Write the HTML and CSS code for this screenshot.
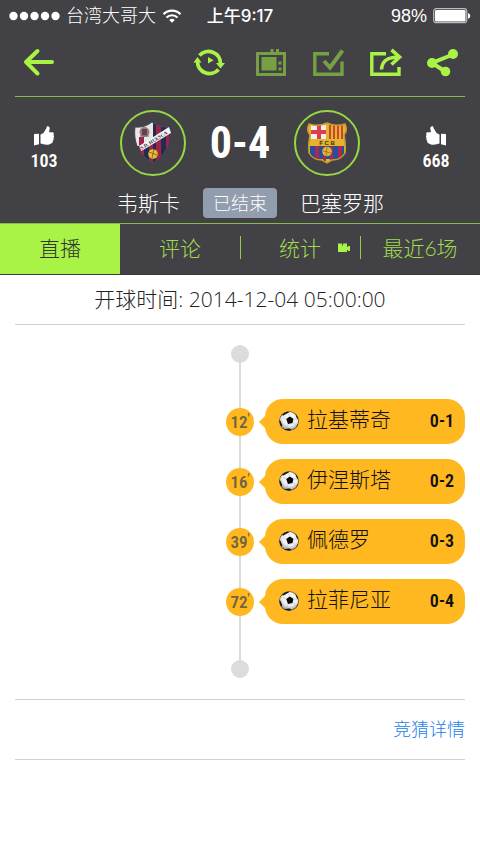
FILE: index.html
```html
<!DOCTYPE html>
<html lang="zh-CN">
<head>
<meta charset="utf-8">
<meta name="viewport" content="width=device-width, initial-scale=1">
<title>韦斯卡 0-4 巴塞罗那</title>
<link rel="stylesheet" href="styles.css">
</head>
<body>
<svg class="defs" aria-hidden="true">
  <defs>
    <radialGradient id="shade" cx="55%" cy="35%" r="70%">
      <stop offset="0" stop-color="#fff"/><stop offset=".6" stop-color="#ebebed"/><stop offset="1" stop-color="#85868c"/>
    </radialGradient>
    <clipPath id="ballclip"><circle cx="10" cy="10" r="9.6"/></clipPath>
    <symbol id="ball" viewBox="0 0 20 20">
      <circle cx="10" cy="10" r="9.8" fill="#3c3320"/>
      <circle cx="10" cy="10" r="9.3" fill="url(#shade)"/>
      <g clip-path="url(#ballclip)">
        <path d="M7.200 8l3.600-2.400 3.600 2.200-.8 4.200-4.600 1z" fill="#090909"/>
        <path d="M3 3.500L8.500 0l2 1-3 1.700-3.500 2zM0 9l1.500 1 1.800 4.200L2 16 0 13zM6 18l4.500-.5 2.500 1.500L11 20H6zM16 2.500l4 4v3l-2-2zM18 14l2-2-1 4-2.500 2z" fill="#151515"/>
        <path d="M10.800 5.600L9.500 2.500M7.200 8L4 6M9.200 13l-1.500 4M13.800 12l3.500 2.500M14.600 7.800L18 8" fill="none" stroke="#b5b5b5" stroke-width=".5"/>
      </g>
    </symbol>
    <symbol id="thumb" viewBox="0 0 20 20">
      <path d="M0 8l5-.3v10.600L0 19.500z"/>
      <path d="M6.500 8.500L9.500 7 12.200 2.500 13 .3c2-.6 3 1 2.600 2.900L15 6.200h3.400c1.600.2 1.900 2 .9 2.900 1 .7.900 2.200 0 2.800.7.800.5 2.200-.5 2.700.5 1-.1 2.200-1.100 2.600l-2 1c-1.600.6-3.500.7-5.200.4l-4-1z"/>
    </symbol>
  </defs>
</svg>

<header class="top">
  <div class="status">
    <div class="carrier">
      <svg class="signal" viewBox="0 0 51 10" aria-hidden="true"><circle cx="4.500" cy="5" r="4.200"/><circle cx="15" cy="5" r="4.200"/><circle cx="25.500" cy="5" r="4.200"/><circle cx="36" cy="5" r="4.200"/><circle cx="46.500" cy="5" r="4.200"/></svg>
      <span>台湾大哥大</span>
      <svg class="wifi" viewBox="0 0 20 14" aria-hidden="true"><path d="M1.500 5.200a12 12 0 0 1 17 0M4.500 8.500a7.800 7.800 0 0 1 11 0" fill="none" stroke="#fff" stroke-width="2.200"/><path d="M7.200 11a4 4 0 0 1 5.600 0L10 13.800z"/></svg>
    </div>
    <time class="clock">上午9:17</time>
    <div class="power">
      <span>98%</span>
      <svg class="battery" viewBox="0 0 38 16" aria-hidden="true"><rect x=".7" y=".7" width="33" height="14" rx="2.500" fill="none" stroke="#bbb" stroke-width="1.200"/><rect x="2" y="2" width="30.500" height="11.500" rx="1.200"/><path d="M35 5c3 .8 3 5 0 5.800z"/></svg>
    </div>
  </div>

  <nav class="toolbar" aria-label="工具">
    <button class="tool back" aria-label="返回"><svg viewBox="0 0 32 28"><path d="M14.500 2L3 13l11.500 11.500M3.500 13H29" fill="none" stroke="#a9f346" stroke-width="4" stroke-linecap="round" stroke-linejoin="round"/></svg></button>
    <button class="tool refresh" aria-label="刷新"><svg viewBox="0 0 32 28"><g fill="none" stroke="#a9f346" stroke-width="3.800"><path d="M5.500 6.500A12 12 0 0 1 26.500 14.500"/><path d="M24.500 20.500A12 12 0 0 1 3.500 12.500"/></g><path d="M22 14h9l-4.500 5.500zM-.5 13.500h8L3.500 8zM14 8l5.500 3.200L14 14.500z" fill="#a9f346"/></svg></button>
    <button class="tool dim" aria-label="电视"><svg viewBox="0 0 32 28"><path d="M14.500 0h3v3h2.500V0h3v3H30v24H0V3h14.500zM3 6v18h24V6z" fill-rule="evenodd"/><path d="M5.500 8h15v13.500h-15zM22.500 12.500h3v3h-3zM22.500 18.500h3v3h-3z"/></svg></button>
    <button class="tool dim" aria-label="预测"><svg viewBox="0 0 32 28"><path d="M16 4.700H1.800v20.600H29V12.500" fill="none" stroke-width="3.400"/><path d="M11 12l6 6.500L29.500 1.500" fill="none" stroke-width="4"/></svg></button>
    <button class="tool" aria-label="转发"><svg viewBox="0 0 32 28"><g fill="none" stroke="#a9f346"><path d="M16 4.700H1.800v20.600H29V18" stroke-width="3.400"/><path d="M11.500 20.500C12 12 17 8 29 8" stroke-width="3.600"/><path d="M21.500.8L29.500 8l-8 7.500" stroke-width="3.600"/></g></svg></button>
    <button class="tool" aria-label="分享"><svg viewBox="0 0 32 28"><path d="M26 5.500L5 14l14 9" fill="none" stroke="#a9f346" stroke-width="4"/><g fill="#a9f346"><circle cx="26" cy="5" r="5"/><circle cx="5" cy="14" r="5"/><circle cx="18.500" cy="22.500" r="4.800"/></g></svg></button>
  </nav>

  <section class="match">
    <div class="board">
      <button class="like"><svg viewBox="0 0 20 20" aria-hidden="true"><use href="#thumb"/></svg><span>103</span></button>
      <div class="teams">
        <div class="crest">
          <svg viewBox="0 0 62 62" role="img" aria-label="韦斯卡">
            <defs><clipPath id="hs"><path d="M13 15Q23 16 30 10Q38 16 48 15C50 33 43 43 31 51C18 44 11 32 13 15z"/></clipPath></defs>
            <g clip-path="url(#hs)">
              <path d="M10 8h42v45H10z" fill="#252b50"/>
              <path d="M12 8h19v26H12z" fill="#e8e6e6"/>
              <path d="M34 8h5v45h-5zM44 8h3v45h-3zM17 25h5v28h-5zM27 30h4v23h-4z" fill="#9d2444"/>
              <circle cx="22.500" cy="20" r="5" fill="#a8776e"/><path d="M20 17h5v6h-5z" fill="#51465e"/><path d="M18 24h9" stroke="#576b76"/>
              <circle cx="31" cy="42" r="4.800" fill="#e3bd3c"/><path d="M27 40l8 3M32 37l-2 9" stroke="#775c22" stroke-width=".8"/>
            </g>
            <path d="M13 15Q23 16 30 10Q38 16 48 15C50 33 43 43 31 51C18 44 11 32 13 15z" fill="none" stroke="#4c4760"/>
            <path d="M17 34l2.500 5L49 21l-2-6z" fill="#f5f5f5"/>
            <text class="crest-name" transform="translate(19.500 38) rotate(-32)">S.D. HUESCA</text>
          </svg>
        </div>
        <strong class="score">0-4</strong>
        <div class="crest">
          <svg viewBox="0 0 62 62" role="img" aria-label="巴塞罗那">
            <defs><clipPath id="fc"><path d="M13 12Q22 15 31 11Q40 15 49 12Q52 18 48 23Q50 33 49 41Q45 48 36 48L31 51 26 48Q17 48 13 41Q12 32 14 23Q10 18 13 12z"/></clipPath></defs>
            <g clip-path="url(#fc)">
              <path d="M10 8h42v44H10z" fill="#e4b32f"/>
              <path d="M15 13h15v14H15z" fill="#f5eee9"/><path d="M21 13h4v14h-4zM15 18h15v4H15z" fill="#d9404b"/>
              <path d="M33 13h2v14h-2zM37 13h2v14h-2zM41 13h2v14h-2zM45 13h2v14h-2z" fill="#cb4634"/>
              <path d="M14 34h34v13H14z" fill="#254f9b"/><path d="M19 34h4v16h-4zM27 34h3v16h-3zM34 34h3v16h-3zM42 34h4v16h-4z" fill="#a82a4d"/>
              <circle cx="31" cy="39.500" r="4.800" fill="#e1b53b"/><path d="M27 39l8 2M31 35l-1 9" stroke="#93702a" stroke-width=".8"/>
            </g>
            <path d="M13 12Q22 15 31 11Q40 15 49 12Q52 18 48 23Q50 33 49 41Q45 48 36 48L31 51 26 48Q17 48 13 41Q12 32 14 23Q10 18 13 12z" fill="none" stroke="#c79a31" stroke-width="1.500"/>
            <text class="crest-fcb" x="31" y="32.500" text-anchor="middle">F C B</text>
          </svg>
        </div>
      </div>
      <button class="like"><svg viewBox="0 0 20 20" aria-hidden="true"><use href="#thumb" transform="matrix(-1 0 0 1 20 0)"/></svg><span>668</span></button>
    </div>
    <div class="names">
      <span class="home">韦斯卡</span>
      <span class="state">已结束</span>
      <span>巴塞罗那</span>
    </div>
  </section>

  <nav class="tabs" aria-label="比赛">
    <a class="tab active" href="#live" aria-current="page">直播</a>
    <a class="tab" href="#comments">评论</a>
    <a class="tab" href="#stats">统计<svg class="camera" viewBox="0 0 12 10" aria-hidden="true"><path d="M0 .5h4v2h1v-2h4V4h1V3h2v5h-2V7H9v2H0z"/></svg></a>
    <a class="tab" href="#recent">最近6场</a>
  </nav>
</header>

<main class="content">
  <p class="kickoff">开球时间: 2014-12-04 05:00:00</p>
  <ol class="timeline">
    <li class="event"><span class="minute">12<sup>'</sup></span><div class="bubble"><svg class="ball" aria-hidden="true"><use href="#ball"/></svg><span class="player">拉基蒂奇</span><b class="result">0-1</b></div></li>
    <li class="event"><span class="minute">16<sup>'</sup></span><div class="bubble"><svg class="ball" aria-hidden="true"><use href="#ball"/></svg><span class="player">伊涅斯塔</span><b class="result">0-2</b></div></li>
    <li class="event"><span class="minute">39<sup>'</sup></span><div class="bubble"><svg class="ball" aria-hidden="true"><use href="#ball"/></svg><span class="player">佩德罗</span><b class="result">0-3</b></div></li>
    <li class="event"><span class="minute">72<sup>'</sup></span><div class="bubble"><svg class="ball" aria-hidden="true"><use href="#ball"/></svg><span class="player">拉菲尼亚</span><b class="result">0-4</b></div></li>
  </ol>
  <div class="more"><a href="#quiz">竞猜详情</a></div>
</main>
</body>
</html>
```
FILE: styles.css
```css
* { box-sizing: border-box; }
body {
  margin: 0;
  background: #fff;
  color: #333;
  font-family: Lato, "Noto Sans CJK SC", sans-serif;
  font-size: 21px;
  font-weight: 300;
}
button { border: 0; padding: 0; background: none; color: inherit; cursor: pointer; }
a { text-decoration: none; }
svg { display: block; }
.defs { position: absolute; width: 0; height: 0; }

.top { background: #424145; color: #fff; }

.status {
  display: grid;
  grid-template-columns: 1fr auto 1fr;
  align-items: center;
  height: 32px;
  padding: 0 9px;
  font-family: "Liberation Sans", "Noto Sans CJK SC", sans-serif;
  font-size: 18px;
  line-height: 32px;
}
.status svg { fill: #fff; }
.carrier, .power { display: flex; align-items: center; gap: 6px; }
.power { justify-content: flex-end; }
.signal { width: 51px; height: 10px; }
.wifi { width: 20px; height: 14px; }
.battery { width: 38px; height: 16px; }
.clock { font-family: Inter, "Noto Sans CJK SC", sans-serif; font-size: 17px; font-weight: 500; }

.toolbar {
  display: flex;
  align-items: center;
  gap: 25px;
  height: 65px;
  margin: 0 15px;
  padding: 0 6px 2px 8px;
  border-bottom: 1px solid #87b94b;
}
.tool svg { width: 32px; height: 28px; overflow: visible; }
.back { margin-right: auto; }
.refresh { margin-right: 5px; }
.dim { fill: #779f44; stroke: #779f44; }
.dim path:not([fill="none"]) { stroke: none; }

.board {
  display: flex;
  align-items: center;
  justify-content: space-between;
  padding: 13px 15px 12px;
}
.like {
  display: flex;
  flex-direction: column;
  align-items: center;
  width: 58px;
  padding-top: 16px;
  font: 600 18px/30px "Roboto Condensed", "Liberation Sans Narrow", sans-serif;
}
.like svg { width: 20px; height: 20px; fill: #fff; }
.teams { display: flex; align-items: center; justify-content: space-between; width: 240px; }
.crest { width: 66px; height: 66px; border: 2px solid #96d842; border-radius: 50%; }
.crest-name { fill: #302f3b; font: 700 5px "Liberation Serif", serif; }
.crest-fcb { fill: #363216; font: 700 6px "Liberation Sans", sans-serif; }
.score { font: 700 44px/50px "Roboto Condensed", "Liberation Sans Narrow", sans-serif; }

.names {
  display: grid;
  grid-template-columns: 1fr auto 1fr;
  gap: 23px;
  align-items: center;
  height: 30px;
  margin-bottom: 5px;
  line-height: 30px;
}
.home { text-align: right; }
.state {
  padding: 0 10px;
  border-radius: 4px;
  background: #929dad;
  font-size: 18px;
}

.tabs {
  display: grid;
  grid-template-columns: repeat(4, 1fr);
  border-top: 1px solid #87b94b;
  border-bottom: 1px solid #39383c;
}
.tab {
  position: relative;
  display: flex;
  align-items: center;
  justify-content: center;
  height: 50px;
  padding-bottom: 4px;
  color: #a0dc4e;
}
.tab.active { background: #a9f346; color: #333; }
.tab + .tab + .tab::before {
  content: "";
  position: absolute;
  left: 0;
  top: 12px;
  width: 1px;
  height: 23px;
  background: #92cc46;
}
.camera { position: absolute; right: 10px; top: 19px; width: 12px; height: 10px; fill: #a9f346; }

.content { padding: 0 15px; }
.kickoff {
  margin: 0;
  border-bottom: 1px solid #d2d2d2;
  color: #222;
  text-align: center;
  font-family: "Open Sans", "Noto Sans CJK SC", sans-serif;
  line-height: 49px;
}
.timeline {
  position: relative;
  display: grid;
  gap: 15px;
  margin: 20px 0 21px;
  padding: 54px 0;
  list-style: none;
  background: linear-gradient(#dcdcdc, #dcdcdc) center / 2px 100% no-repeat;
}
.timeline::before, .timeline::after {
  content: "";
  position: absolute;
  left: 50%;
  width: 18px;
  height: 18px;
  margin-left: -9px;
  border-radius: 50%;
  background: #dcdcdc;
}
.timeline::before { top: 0; }
.timeline::after { bottom: 0; }
.event {
  display: grid;
  grid-template-columns: 1fr 28px 1fr;
  column-gap: 11px;
  align-items: center;
}
.minute {
  grid-column: 2;
  height: 28px;
  border-radius: 50%;
  background: #ffb81f;
  color: #71643e;
  font: 600 17px/28px "Roboto Condensed", "Liberation Sans Narrow", sans-serif;
  text-align: center;
}
.minute sup { font-size: 12px; line-height: 0; vertical-align: 5px; }
.bubble {
  position: relative;
  display: flex;
  align-items: center;
  gap: 8px;
  height: 45px;
  padding: 0 11px 2px 14px;
  border-radius: 18px;
  background: #ffb81f;
  color: #111;
}
.bubble::before {
  content: "";
  position: absolute;
  left: -6px;
  top: 16px;
  border: solid transparent;
  border-width: 7px 7px 7px 0;
  border-right-color: #ffb81f;
}
.ball { width: 20px; height: 20px; }
.player { flex: 1; line-height: 39px; padding-bottom: 4px; }
.result { font: 600 18px/43px "Roboto Condensed", "Liberation Sans Narrow", sans-serif; }
.more {
  border: solid #d2d2d2;
  border-width: 1px 0;
  text-align: right;
  font-size: 18px;
  line-height: 59px;
}
.more a { color: #1980ed; }
```
